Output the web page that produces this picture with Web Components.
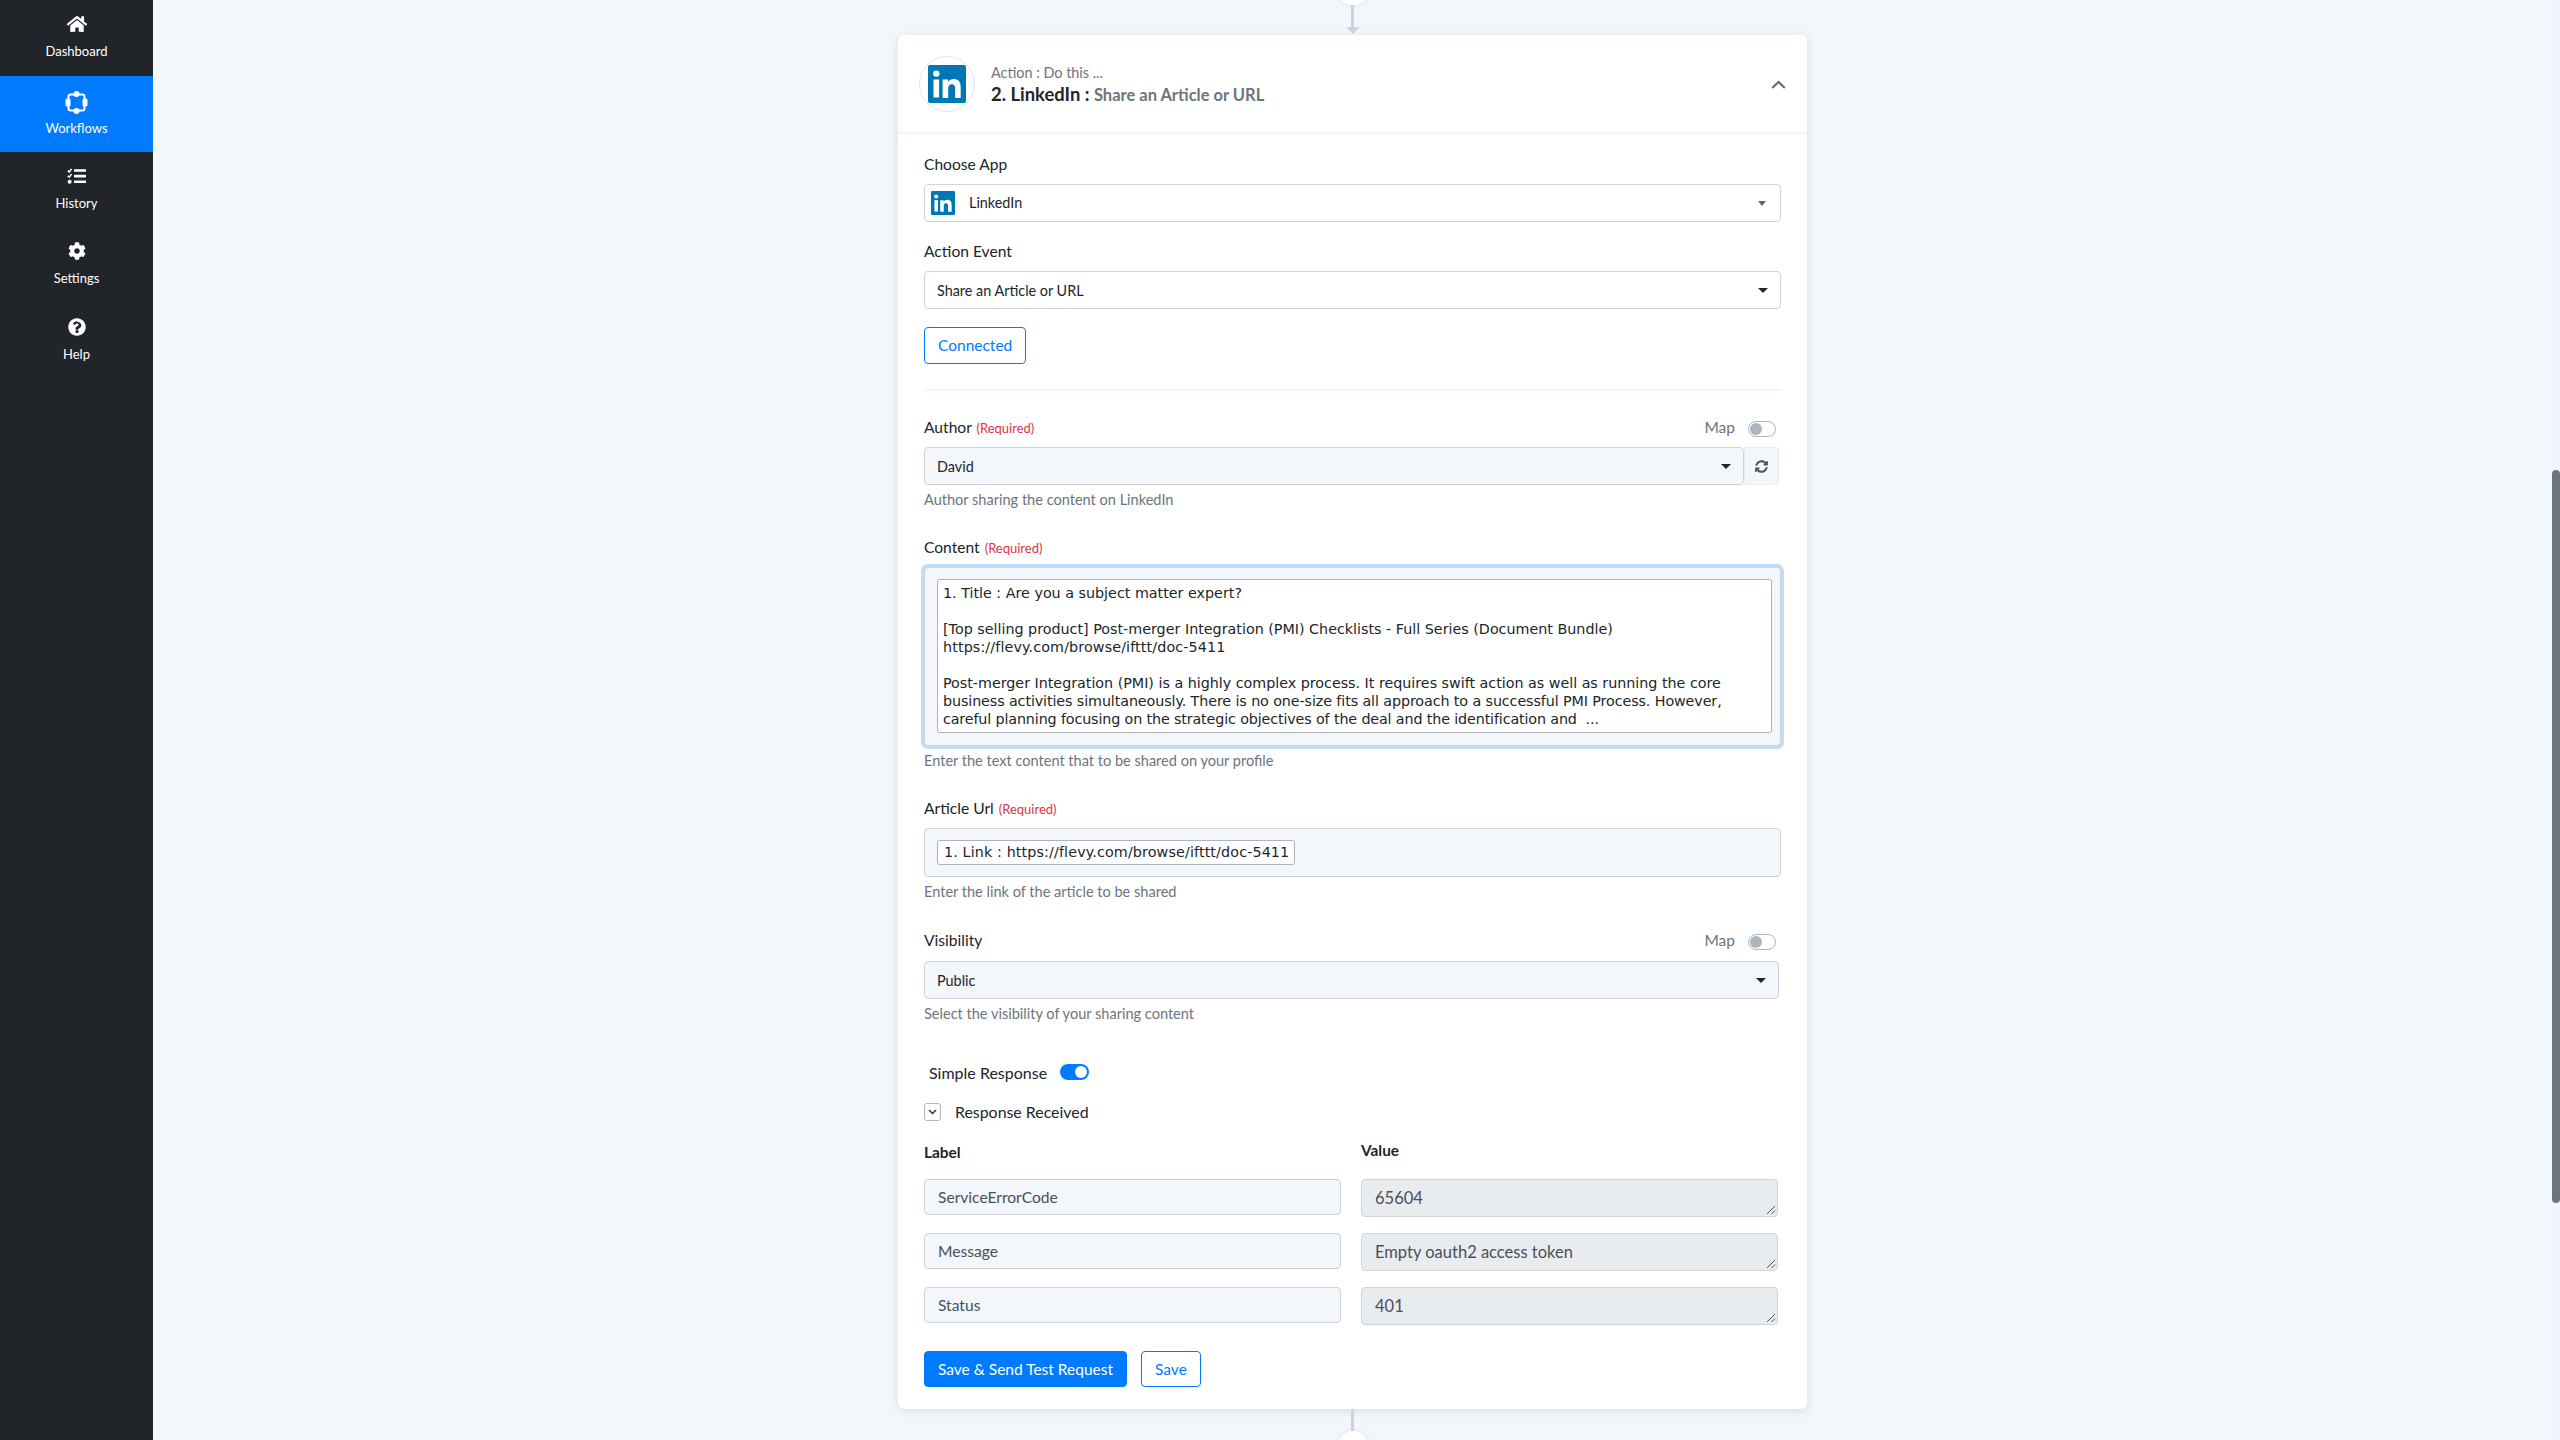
<!DOCTYPE html>
<html><head><meta charset="utf-8"><style>
html,body{margin:0;padding:0;height:1440px;overflow:hidden;background:#f3f6fa;font-family:Lato,"Liberation Sans",sans-serif;color:#212529}
#app{display:flex;height:1440px}
</style></head><body>
<div id="app">
<fl-sidebar>
<fl-navitem label="Dashboard" icon="home"></fl-navitem>
<fl-navitem label="Workflows" icon="flow" active></fl-navitem>
<fl-navitem label="History" icon="tasks"></fl-navitem>
<fl-navitem label="Settings" icon="cog"></fl-navitem>
<fl-navitem label="Help" icon="help"></fl-navitem>
</fl-sidebar>
<fl-main><fl-card></fl-card></fl-main>
<fl-scroll></fl-scroll>
</div>
<script>
const ICONS={
home:'<svg width="22" height="18" viewBox="0 0 576 512"><path fill="#fff" d="M280.4 148.3 96 300.1V464a16 16 0 0 0 16 16l112-.3a16 16 0 0 0 16-16V368a16 16 0 0 1 16-16h64a16 16 0 0 1 16 16v95.6a16 16 0 0 0 16 16l112 .4a16 16 0 0 0 16-16V300L295.7 148.3a12.2 12.2 0 0 0-15.3 0zM571.6 251.5 488 182.6V44a12 12 0 0 0-12-12h-56a12 12 0 0 0-12 12v72.6L318.5 43a48 48 0 0 0-61 0L4.3 251.5a12 12 0 0 0-1.6 16.9l25.5 31a12 12 0 0 0 16.9 1.6l235.2-193.7a12.2 12.2 0 0 1 15.3 0L530.9 301a12 12 0 0 0 16.9-1.6l25.5-31a12 12 0 0 0-1.7-17z"/></svg>',
flow:'<svg width="23" height="23" viewBox="0 0 23 23"><rect x="3.500" y="3.500" width="16" height="16" rx="2" fill="none" stroke="#fff" stroke-width="2"/><circle cx="11.500" cy="3" r="3" fill="#fff"/><circle cx="11.500" cy="20" r="3" fill="#fff"/><rect x="0.500" y="7.500" width="5" height="8" rx="1.500" fill="#fff"/><rect x="17.500" y="7.500" width="5" height="8" rx="1.500" fill="#fff"/></svg>',
tasks:'<svg width="19" height="16" viewBox="0 0 19 16"><path fill="none" stroke="#fff" stroke-width="1.5" d="M.8 2.6 2.2 4 4.6.9M.8 7.8 2.2 9.2 4.6 6.1"/><circle cx="2.6" cy="13.8" r="2" fill="#fff"/><rect x="7" y="1.2" width="12" height="2.6" rx=".6" fill="#fff"/><rect x="7" y="6.8" width="12" height="2.6" rx=".6" fill="#fff"/><rect x="7" y="12.4" width="12" height="2.6" rx=".6" fill="#fff"/></svg>',
cog:'<svg width="18" height="18" viewBox="0 0 512 512"><path fill="#fff" d="M487.4 315.7l-42.6-24.6c4.3-23.2 4.3-47 0-70.2l42.6-24.6c4.9-2.8 7.1-8.6 5.5-14-11.1-35.6-30-67.8-54.7-94.6-3.8-4.1-10-5.1-14.8-2.3L380.8 110c-17.9-15.4-38.5-27.3-60.8-35.1V25.8c0-5.6-3.9-10.5-9.4-11.7-36.7-8.2-74.3-7.8-109.2 0-5.5 1.2-9.4 6.1-9.4 11.7V75c-22.2 7.9-42.8 19.8-60.8 35.1L88.7 85.5c-4.9-2.8-11-1.9-14.8 2.3-24.7 26.7-43.6 58.9-54.7 94.6-1.7 5.4.6 11.2 5.5 14L67.3 221c-4.3 23.2-4.3 47 0 70.2l-42.6 24.6c-4.9 2.8-7.1 8.6-5.5 14 11.1 35.6 30 67.8 54.7 94.6 3.8 4.1 10 5.1 14.8 2.3l42.6-24.6c17.9 15.4 38.5 27.3 60.8 35.1v49.2c0 5.6 3.9 10.5 9.4 11.7 36.7 8.2 74.3 7.8 109.2 0 5.5-1.2 9.4-6.1 9.4-11.7v-49.2c22.2-7.9 42.8-19.8 60.8-35.1l42.6 24.6c4.9 2.8 11 1.9 14.8-2.3 24.7-26.7 43.6-58.9 54.7-94.6 1.5-5.5-.7-11.3-5.6-14.1zM256 336c-44.1 0-80-35.9-80-80s35.9-80 80-80 80 35.9 80 80-35.9 80-80 80z"/></svg>',
help:'<svg width="18" height="18" viewBox="0 0 512 512"><path fill="#fff" d="M504 256c0 137-111 248-248 248S8 393 8 256 119 8 256 8s248 111 248 248zM262.7 90c-54.5 0-89.3 23-116.5 63.8-3.5 5.3-2.4 12.4 2.7 16.3l34.7 26.3c5.2 3.9 12.6 3 16.7-2.1 17.9-22.7 30.1-35.8 57.3-35.8 20.4 0 45.7 13.1 45.7 33 0 15-12.4 22.7-32.6 34-23.6 13.2-54.8 29.7-54.8 70.9V320c0 6.6 5.4 12 12 12h56c6.6 0 12-5.4 12-12v-1.3c0-28.5 83.4-29.7 83.4-106.9 0-58.1-60.3-102-116.6-102zM256 338c-25.4 0-46 20.6-46 46 0 25.4 20.6 46 46 46s46-20.6 46-46c0-25.4-20.6-46-46-46z"/></svg>'
};
const LI=s=>`<svg width="${s}" height="${s}" viewBox="0 0 38 38" style="display:block;flex:none"><rect width="38" height="38" rx="2" fill="#0077b5"/><rect x="5.5" y="14.5" width="5.6" height="18" fill="#fff"/><circle cx="8.3" cy="8.6" r="3.2" fill="#fff"/><path fill="#fff" d="M14.6 14.5H20v2.5c.9-1.6 2.9-3 5.8-3 5.6 0 6.9 3.7 6.9 8.6v10.4h-5.6v-9.2c0-2.4-.5-4.6-3.2-4.6s-3.7 1.9-3.7 4.4v9.4h-5.6z"/></svg>`;
function def(name,css,html){
 customElements.define(name,class extends HTMLElement{
  constructor(){super();this.attachShadow({mode:'open'});}
  connectedCallback(){this.shadowRoot.innerHTML='<style>'+css+'</style>'+(typeof html==='function'?html(this):html);}
 });
}
def('fl-sidebar',':host{display:flex;flex-direction:column;width:153px;flex:none;background:#212529;height:1440px}','<slot></slot>');
def('fl-navitem',`:host{display:flex;flex-direction:column;align-items:center;height:75.6px;color:#fff;font-size:13px;box-sizing:border-box;position:relative}
:host([active]){background:#007bff;height:76px}
.i{height:24px;margin-top:12px;display:flex;align-items:center;justify-content:center}
.l{margin-top:7px;line-height:16px}
:host([active]) .i{margin-top:15px}
:host([active]) .l{margin-top:5px}`,h=>`<div class="i">${ICONS[h.getAttribute('icon')]}</div><div class="l">${h.getAttribute('label')}</div>`);
def('fl-main',':host{display:flex;flex-direction:column;align-items:center;flex:1;min-width:0;height:1440px;overflow:hidden}','<slot></slot>');
def('fl-scroll',':host{display:block;width:8px;flex:none;background:#f0f6fe;height:1440px;padding-top:470px;box-sizing:border-box} div{height:733px;background:#6c757d;border-radius:4px}','<div></div>');
def('fl-field',`:host{display:block;font-size:15.6px}
.top{display:flex;align-items:center;justify-content:space-between;height:19px;margin-bottom:var(--lb,10px);line-height:19px}
.req{color:#dc3545;font-size:13px;margin-left:1px}
.map{display:flex;align-items:center;color:#6c757d;font-size:15.5px;gap:13px;margin-right:5px}
.tog{border:1px solid #adb5bd;border-radius:8px;background:#fff;position:relative;box-sizing:border-box;width:28px;height:16px;margin-top:2px}
.tog i{position:absolute;left:1px;top:1px;width:12px;height:12px;border-radius:50%;background:#adb5bd}
.help{font-size:14.55px;color:#6c757d;margin-top:6px;line-height:18px}`,
h=>`<div class="top"><span>${h.getAttribute('label')}${h.hasAttribute('req')?' <span class="req">(Required)</span>':''}</span>${h.hasAttribute('map')?'<span class="map">Map<span class="tog"><i></i></span></span>':''}</div><slot></slot>${h.getAttribute('help')?`<div class="help">${h.getAttribute('help')}</div>`:''}`);
def('fl-select',`:host{display:flex;align-items:center;box-sizing:border-box;height:38px;border:1px solid #ced4da;border-radius:4px;padding:0 12px;font-size:14.4px;background:#fff;color:#212529}
:host([gray]){background:#f3f6fa}
.c{flex:1;display:flex;align-items:center;min-width:0}
.a{width:0;height:0;border-left:5px solid transparent;border-right:5px solid transparent;border-top:5px solid #212529}
:host([soft]) .a{border-left-width:4.5px;border-right-width:4.5px;border-top-color:#5f6670;margin-right:2px}`,
'<div class="c"><slot></slot></div><div class="a"></div>');
def('fl-token',`:host{display:block;font-family:"DejaVu Sans",Verdana,sans-serif;font-size:14.3px;color:#212529;background:#fff;border:1px solid #aeb3b8;border-radius:3px;box-sizing:border-box}`,'<slot></slot>');
def('fl-input',`:host{display:flex;align-items:center;box-sizing:border-box;height:36px;border:1px solid #ced4da;border-radius:4px;padding:0 13px;background:#f3f6fa;color:#495057;font-size:15.6px}`,'<slot></slot>');
def('fl-area',`:host{display:flex;align-items:center;box-sizing:border-box;height:38px;border:1px solid #ced4da;border-radius:4px;padding:0 13px;background:#e9ecef;color:#495057;font-size:16.5px;position:relative}
svg{position:absolute;right:1px;bottom:1px}`,'<slot></slot><svg width="10" height="10" viewBox="0 0 10 10"><path d="M1 9 9 1M5.500 9 9 5.500" stroke="#555" stroke-width="1"/></svg>');
def('fl-btn',`:host{display:inline-flex;align-items:center;justify-content:center;box-sizing:border-box;height:36px;border:1px solid #007bff;border-radius:4px;padding:0 13px 1px;color:#007bff;background:#fff;font-size:15.5px}
:host([primary]){background:#007bff;color:#fff}`,'<slot></slot>');
def('fl-connector',`:host{display:flex;flex-direction:column;align-items:center;width:100%;height:var(--h);flex:none;position:relative}
.line{width:3px;background:#cdd2dc;flex:none}
.dot{border-radius:50%;background:#fff;box-shadow:0 0 5px rgba(40,60,90,.1);flex:none}`,
h=>h.hasAttribute('top')
 ?`<div class="dot" style="width:36px;height:36px;margin-top:-31px"></div><div class="line" style="height:23px"></div><div style="flex:none;width:0;height:0;border-left:7px solid transparent;border-right:7px solid transparent;border-top:7px solid #cdd2dc;margin-top:-1px"></div>`
 :`<div class="line" style="height:22px"></div><div class="dot" style="width:30px;height:30px"></div>`);
def('fl-card',`:host{display:flex;flex-direction:column;align-items:center;flex:none}
.card{width:909px;height:1374px;box-sizing:border-box;background:#fff;border-radius:6px;box-shadow:0 2px 10px rgba(40,60,90,.12);flex:none}
.head{display:flex;align-items:center;height:99px;box-sizing:border-box;border-bottom:2px solid #eff6ff;padding:0 21px}
.circ{width:56px;height:56px;border-radius:50%;border:1px solid #dbe6fb;box-sizing:border-box;display:flex;align-items:center;justify-content:center;flex:none}
.ttl{margin-left:16px;flex:1;font-size:14.4px;color:#6c757d;line-height:20px;padding-top:2px}
.ttl b{display:block;font-size:18.4px;font-weight:700;color:#212529;line-height:23px}
.ttl b span{color:#6c757d;font-size:16.5px}
.body{padding:0 26px;display:flex;flex-direction:column}
.sel{display:flex;gap:0}
.ref{width:35px;height:38px;box-sizing:border-box;border:1px solid #e9ecef;border-radius:0 4px 4px 0;background:#f3f6fa;display:flex;align-items:center;justify-content:center;flex:none;margin-right:2px}
hr{border:0;border-top:2px solid #eff6ff;margin:25px 0 0;height:0}
.ring{box-sizing:border-box;height:179px;border:1px solid #ced4da;border-radius:4px;background:#f3f6fa;padding:11px 8px 12px 12px;box-shadow:0 0 0 3px #bfdcfb;margin:1px 0 0}
.ring fl-token{height:154px;padding:4px 5px 0;line-height:18px;white-space:pre;overflow:hidden}
.url{box-sizing:border-box;height:49px;border:1px solid #ced4da;border-radius:4px;background:#f3f6fa;padding:11px 12px;display:flex}
.url fl-token{height:25px;line-height:23px;padding:0 5px 0 6px;letter-spacing:.13px}
.sw{display:flex;align-items:center;font-size:16px;height:20px;margin:0 0 0 5px}
.tg{width:29px;height:16px;border-radius:8px;background:#007bff;margin-left:13px;position:relative}
.tg i{position:absolute;right:2px;top:2px;width:12px;height:12px;border-radius:50%;background:#fff}
.rr{display:flex;align-items:center;font-size:15.9px;margin-top:19px;height:20px}
.ck{width:17px;height:18px;box-sizing:border-box;border:1px solid #adb5bd;border-radius:3px;margin-right:14px;display:flex;align-items:center;justify-content:center;background:#fff;margin-top:2px}
.grid{display:grid;grid-template-columns:417px 417px;grid-template-rows:23px 38px 38px 38px;column-gap:20px;row-gap:16px;font-size:15.4px;align-items:start;margin-top:19px}
.h{font-weight:700;height:19px;line-height:19px}
.btns{display:flex;gap:14px;margin-top:26px}`,
`<fl-connector top style="--h:35px"></fl-connector>
<div class="card">
 <div class="head"><div class="circ">${LI(38)}</div>
  <div class="ttl">Action : Do this ...<b>2. LinkedIn : <span>Share an Article or URL</span></b></div>
  <svg width="15" height="9" viewBox="0 0 15 9" style="margin:2px 0 0"><path d="M1.200 8 7.500 2l6.300 6" fill="none" stroke="#5b6b7d" stroke-width="2"/></svg></div>
 <div class="body">
  <fl-field label="Choose App" style="margin-top:21px"><fl-select soft style="padding-left:6px">${LI(24)}<span style="margin:-2px 0 0 14px">LinkedIn</span></fl-select></fl-field>
  <fl-field label="Action Event" style="margin-top:20px"><fl-select>Share an Article or URL</fl-select></fl-field>
  <div style="margin-top:18px;height:37px"><fl-btn style="height:37px">Connected</fl-btn></div>
  <hr>
  <fl-field label="Author" req map help="Author sharing the content on LinkedIn" style="margin-top:27px"><div class="sel"><fl-select gray style="flex:1">David</fl-select><div class="ref"><svg width="13" height="13" viewBox="0 0 512 512"><path fill="#555" d="M370.700 133.300A168 168 0 0 0 94 219.800c-1 5.600-6 9.700-11.700 9.700H25c-7.500 0-13.200-6.800-11.800-14.200C33 94.900 142.800 8 264 8c66 0 126 26.800 169 70.100l35-35c15.100-15.100 41-4.400 41 17V192c0 13.300-10.700 24-24 24H353.900c-21.400 0-32.100-25.900-17-41zM32 296h131.200c21.400 0 32.100 25.900 17 41l-40.900 40.900a168 168 0 0 0 276.700-86.700c1-5.600 6-9.700 11.700-9.700H487c7.500 0 13.200 6.800 11.800 14.200C479 417.100 369.200 504 248 504c-66 0-126-26.800-169-70.100l-35 35C28.900 484 3 473.300 3 451.900V320c0-13.300 10.700-24 24-24z"/></svg></div></div></fl-field>
  <fl-field label="Content" req help="Enter the text content that to be shared on your profile" style="margin-top:29px"><div class="ring"><fl-token>1. Title : Are you a subject matter expert?

[Top selling product] Post-merger Integration (PMI) Checklists - Full Series (Document Bundle)
<span style="letter-spacing:.125px">https://flevy.com/browse/ifttt/doc-5411</span>

<span style="letter-spacing:-.015px">Post-merger Integration (PMI) is a highly complex process. It requires swift action as well as running the core</span>
<span style="letter-spacing:-.1px">business activities simultaneously. There is no one-size fits all approach to a successful PMI Process. However,</span>
<span style="letter-spacing:-.133px">careful planning focusing on the strategic objectives of the deal and the identification and  ...</span></fl-token></div></fl-field>
  <fl-field label="Article Url" req help="Enter the link of the article to be shared" style="margin-top:29px"><div class="url"><fl-token>1. Link : https://flevy.com/browse/ifttt/doc-5411</fl-token></div></fl-field>
  <fl-field label="Visibility" map help="Select the visibility of your sharing content" style="margin-top:30px;--lb:11px"><fl-select gray style="margin-right:2px">Public</fl-select></fl-field>
  <div class="sw" style="margin-top:39px">Simple Response<span class="tg"><i></i></span></div>
  <div class="rr"><span class="ck"><svg width="9" height="6" viewBox="0 0 9 6"><path d="M1 1l3.500 3.500L8 1" fill="none" stroke="#333" stroke-width="1.500"/></svg></span>Response Received</div>
  <div class="grid">
   <div class="h" style="margin-top:3px">Label</div><div class="h" style="margin-top:1px">Value</div>
   <fl-input>ServiceErrorCode</fl-input><fl-area>65604</fl-area>
   <fl-input>Message</fl-input><fl-area>Empty oauth2 access token</fl-area>
   <fl-input>Status</fl-input><fl-area>401</fl-area>
  </div>
  <div class="btns"><fl-btn primary>Save &amp; Send Test Request</fl-btn><fl-btn>Save</fl-btn></div>
 </div>
</div>
<fl-connector style="--h:40px"></fl-connector>`);
</script>
</body></html>
